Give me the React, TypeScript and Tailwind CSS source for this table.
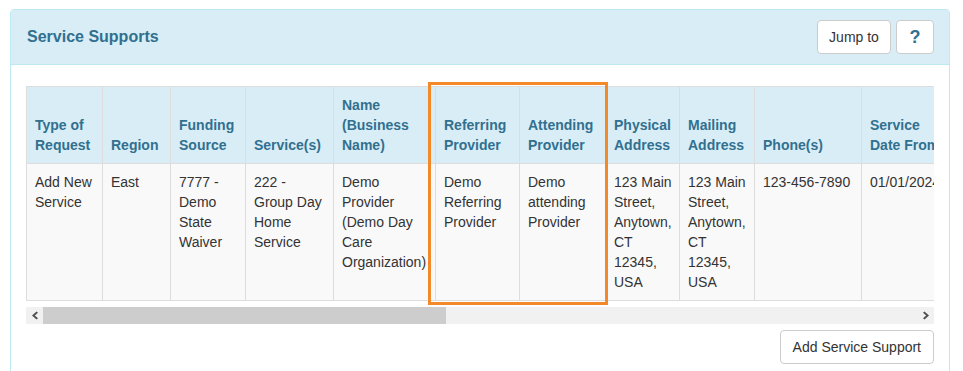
import React, { FC } from "react";

interface Column {
  label: string;
  width: number;
  value: string;
}

const columns: Column[] = [
  { label: "Type of Request", width: 76, value: "Add New Service" },
  { label: "Region", width: 68, value: "East" },
  { label: "Funding Source", width: 75, value: "7777 - Demo State Waiver" },
  { label: "Service(s)", width: 88, value: "222 - Group Day Home Service" },
  { label: "Name (Business Name)", width: 102, value: "Demo Provider (Demo Day Care Organization)" },
  { label: "Referring Provider", width: 84, value: "Demo Referring Provider" },
  { label: "Attending Provider", width: 86, value: "Demo attending Provider" },
  { label: "Physical Address", width: 74, value: "123 Main Street, Anytown, CT 12345, USA" },
  { label: "Mailing Address", width: 75, value: "123 Main Street, Anytown, CT 12345, USA" },
  { label: "Phone(s)", width: 107, value: "123-456-7890" },
  { label: "Service Date From", width: 88, value: "01/01/2024" },
];

const Chevron: FC<{ dir: "left" | "right" }> = ({ dir }) => (
  <svg width="6" height="9" viewBox="0 0 6 9">
    {dir === "left" ? (
      <polygon points="4.5,0.5 6,1.8 2.8,4.5 6,7.2 4.5,8.5 0,4.5" fill="#505050" />
    ) : (
      <polygon points="1.5,0.5 0,1.8 3.2,4.5 0,7.2 1.5,8.5 6,4.5" fill="#505050" />
    )}
  </svg>
);

const App: FC = () => {
  return (
    <div className="bg-white w-[963px] h-[371px] overflow-hidden pt-[9px] pl-[10px] font-['Liberation_Sans',Arial,sans-serif] text-[14px] leading-[20px] text-[#333]">
      <div className="w-[940px] border border-[#bce8f1] rounded-[4px] bg-white">
        {/* header */}
        <div className="flex items-center justify-between bg-[#d9edf7] border-b border-[#bce8f1] rounded-t-[3px] px-[15px] py-[10px]">
          <h3 className="text-[16px] font-bold text-[#31708f] pl-[1px]">Service Supports</h3>
          <div className="flex gap-[5px]">
            <button className="h-[34px] w-[74px] bg-white border border-[#ccc] rounded-[4px] text-[#333] text-[14px]">
              Jump to
            </button>
            <button className="h-[34px] w-[38px] bg-white border border-[#ccc] rounded-[4px] text-[#31708f] text-[18px] font-bold">
              ?
            </button>
          </div>
        </div>

        {/* body */}
        <div className="px-[15px] pt-[21px] pb-[15px]">
          <div className="relative">
            <div className="w-[908px] overflow-hidden">
              <table className="table-fixed border-collapse border border-[#ddd] w-max">
                <thead>
                  <tr className="bg-[#d9edf7]">
                    {columns.map((c) => (
                      <th
                        key={c.label}
                        style={{ width: c.width }}
                        className="border border-[#ddd] p-[8px] pr-[6px] align-bottom text-left font-bold text-[#31708f]"
                      >
                        {c.label}
                      </th>
                    ))}
                  </tr>
                </thead>
                <tbody>
                  <tr className="bg-[#f9f9f9]">
                    {columns.map((c) => (
                      <td
                        key={c.label}
                        className="border border-[#ddd] p-[8px] pr-[6px] align-top h-[137px]"
                      >
                        {c.value}
                      </td>
                    ))}
                  </tr>
                </tbody>
              </table>
            </div>

            {/* scrollbar */}
            <div className="mt-[6px] flex h-[17px] w-[908px] bg-[#f1f1f1]">
              <div className="flex w-[17px] items-center justify-center">
                <Chevron dir="left" />
              </div>
              <div className="w-[403px] bg-[#cdcdcd]" />
              <div className="flex-1" />
              <div className="flex w-[17px] items-center justify-center">
                <Chevron dir="right" />
              </div>
            </div>

            {/* highlight */}
            <div className="absolute left-[402px] top-[-4px] w-[180px] h-[223px] border-[3px] border-[#f4892a] pointer-events-none" />
          </div>

          <div className="mt-[6px] flex justify-end">
            <button className="h-[34px] px-[12px] bg-white border border-[#ccc] rounded-[4px] text-[#333] text-[14px]">
              Add Service Support
            </button>
          </div>
        </div>
      </div>
    </div>
  );
};

export default App;
